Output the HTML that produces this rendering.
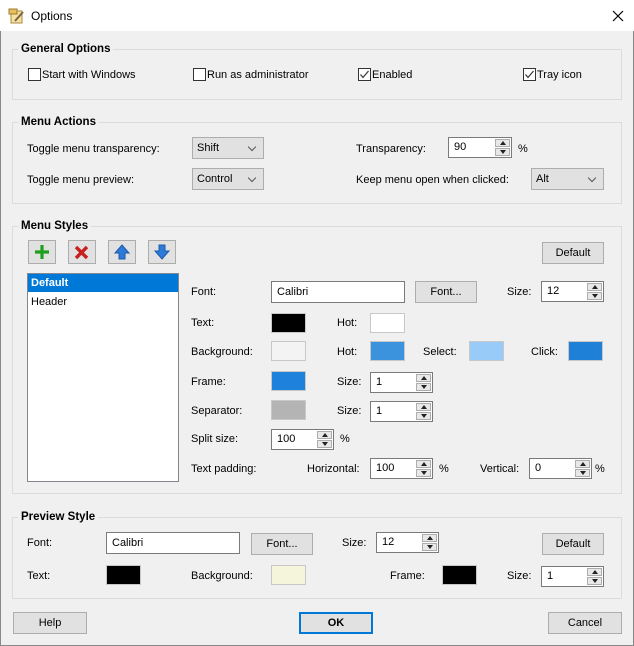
<!DOCTYPE html>
<html><head><meta charset="utf-8"><style>
*{box-sizing:border-box;margin:0;padding:0}
body{width:634px;height:646px;overflow:hidden;background:#f0f0f0;font-family:"Liberation Sans",Tahoma,sans-serif;font-size:11px;color:#000;position:relative}
.a{position:absolute}
.t{position:absolute;line-height:14px;white-space:nowrap}
.grp{position:absolute;border:1px solid #dcdcdc}
.gt{position:absolute;background:#f0f0f0;padding:0 3px;font-weight:bold;font-size:11.5px;line-height:14px}
.cb{position:absolute;width:13px;height:13px;border:1px solid #333;background:#fff}
.cmb{position:absolute;border:1px solid #adadad;background:#e1e1e1;height:22px;line-height:20px;padding-left:4px}
.cmb:after{content:"";position:absolute;right:8px;top:6px;width:5px;height:5px;border-right:1px solid #555;border-bottom:1px solid #555;transform:rotate(45deg)}
.btn{position:absolute;border:1px solid #adadad;background:#e1e1e1;height:22px;line-height:20px;text-align:center}
.tb{position:absolute;border:1px solid #7a7a7a;background:#fff;height:22px;line-height:20px;padding-left:5px}
.spin{position:absolute;border:1px solid #7a7a7a;background:#fff;height:21px;line-height:19px;padding-left:5px}
.spin i{position:absolute;right:1px;width:15px;height:8px;border:1px solid #adadad;background:#e8e8e8}
.spin i.u{top:1px}.spin i.d{bottom:1px}
.spin i:after{content:"";position:absolute;left:4px;border-left:3px solid transparent;border-right:3px solid transparent}
.spin i.u:after{top:1px;border-bottom:4px solid #222}
.spin i.d:after{top:1px;border-top:4px solid #222}
.sw{position:absolute;width:35px;height:20px;border:1px solid #c8c8c8}
</style></head><body>
<div class="a" style="left:0;top:0;width:634px;height:646px;border:1px solid #888;border-top:none"></div>
<div class="a" style="left:0;top:0;width:634px;height:31px;background:#fff"></div>
<svg class="a" style="left:8px;top:7px" width="17" height="17" viewBox="0 0 17 17"><rect x="3" y="4" width="11" height="12" fill="#f3e3a0" stroke="#a88a40"/><rect x="1" y="2" width="8" height="5" fill="#e8c060" stroke="#a07830"/><path d="M7 14 L15 5" stroke="#806040" stroke-width="2"/></svg>
<div class="t" style="left:31px;top:9px;font-size:12px">Options</div>
<svg class="a" style="left:612px;top:10px" width="12" height="12"><path d="M1 1L11 11M11 1L1 11" stroke="#000" stroke-width="1.2"/></svg>

<div class="grp" style="left:12px;top:49px;width:610px;height:51px"></div>
<div class="gt" style="left:18px;top:42px">General Options</div>
<div class="cb" style="left:28px;top:68px"></div><div class="t" style="left:42px;top:68px">Start with Windows</div>
<div class="cb" style="left:193px;top:68px"></div><div class="t" style="left:207px;top:68px">Run as administrator</div>
<div class="cb" style="left:358px;top:68px"></div><svg class="a" style="left:358px;top:68px" width="13" height="13"><path d="M2.5 6.5L5 9.5L10.5 3" stroke="#333" stroke-width="1.2" fill="none"/></svg><div class="t" style="left:372px;top:68px">Enabled</div>
<div class="cb" style="left:523px;top:68px"></div><svg class="a" style="left:523px;top:68px" width="13" height="13"><path d="M2.5 6.5L5 9.5L10.5 3" stroke="#333" stroke-width="1.2" fill="none"/></svg><div class="t" style="left:537px;top:68px">Tray icon</div>

<div class="grp" style="left:12px;top:122px;width:610px;height:82px"></div>
<div class="gt" style="left:18px;top:115px">Menu Actions</div>
<div class="t" style="left:27px;top:142px">Toggle menu transparency:</div>
<div class="cmb" style="left:192px;top:137px;width:72px">Shift</div>
<div class="t" style="left:27px;top:173px">Toggle menu preview:</div>
<div class="cmb" style="left:192px;top:168px;width:72px">Control</div>
<div class="t" style="left:356px;top:142px">Transparency:</div>
<div class="spin" style="left:448px;top:137px;width:64px">90<i class="u"></i><i class="d"></i></div>
<div class="t" style="left:518px;top:142px">%</div>
<div class="t" style="left:356px;top:173px">Keep menu open when clicked:</div>
<div class="cmb" style="left:531px;top:168px;width:73px">Alt</div>

<div class="grp" style="left:12px;top:226px;width:610px;height:268px"></div>
<div class="gt" style="left:18px;top:219px">Menu Styles</div>
<div class="btn" style="left:28px;top:240px;width:28px;height:24px"></div>
<svg class="a" style="left:33px;top:243px" width="18" height="18"><path d="M9 2V16M2 9H16" stroke="#1ea01e" stroke-width="3.2"/></svg>
<div class="btn" style="left:68px;top:240px;width:28px;height:24px"></div>
<svg class="a" style="left:74px;top:245px" width="15" height="15"><path d="M2 2L13 13M13 2L2 13" stroke="#c82020" stroke-width="3.4"/></svg>
<div class="btn" style="left:108px;top:240px;width:28px;height:24px"></div>
<svg class="a" style="left:114px;top:243px" width="16" height="18"><path d="M8 2L15 10H11V16H5V10H1Z" fill="#2f7ad8" stroke="#1d5aa8"/></svg>
<div class="btn" style="left:148px;top:240px;width:28px;height:24px"></div>
<svg class="a" style="left:154px;top:243px" width="16" height="18"><path d="M8 16L15 8H11V2H5V8H1Z" fill="#2f7ad8" stroke="#1d5aa8"/></svg>
<div class="btn" style="left:542px;top:242px;width:62px">Default</div>
<div class="a" style="left:27px;top:273px;width:152px;height:209px;border:1px solid #828790;background:#fff"></div>
<div class="a" style="left:28px;top:274px;width:150px;height:18px;background:#0078d7"></div>
<div class="t" style="left:31px;top:276px;color:#fff;font-weight:bold">Default</div>
<div class="t" style="left:31px;top:295px">Header</div>

<div class="t" style="left:191px;top:285px">Font:</div>
<div class="tb" style="left:271px;top:281px;width:134px">Calibri</div>
<div class="btn" style="left:415px;top:281px;width:62px">Font...</div>
<div class="t" style="left:507px;top:285px">Size:</div>
<div class="spin" style="left:541px;top:281px;width:63px">12<i class="u"></i><i class="d"></i></div>
<div class="t" style="left:191px;top:316px">Text:</div>
<div class="sw" style="left:271px;top:313px;background:#000"></div>
<div class="t" style="left:337px;top:316px">Hot:</div>
<div class="sw" style="left:370px;top:313px;background:#fff"></div>
<div class="t" style="left:191px;top:345px">Background:</div>
<div class="sw" style="left:271px;top:341px;background:#f3f3f3"></div>
<div class="t" style="left:337px;top:345px">Hot:</div>
<div class="sw" style="left:370px;top:341px;background:#3a93dc"></div>
<div class="t" style="left:423px;top:345px">Select:</div>
<div class="sw" style="left:469px;top:341px;background:#99cbf8"></div>
<div class="t" style="left:531px;top:345px">Click:</div>
<div class="sw" style="left:568px;top:341px;background:#1f80d8"></div>
<div class="t" style="left:191px;top:375px">Frame:</div>
<div class="sw" style="left:271px;top:371px;background:#1e82dc"></div>
<div class="t" style="left:337px;top:375px">Size:</div>
<div class="spin" style="left:370px;top:372px;width:63px">1<i class="u"></i><i class="d"></i></div>
<div class="t" style="left:191px;top:404px">Separator:</div>
<div class="sw" style="left:271px;top:400px;background:#b4b4b4"></div>
<div class="t" style="left:337px;top:404px">Size:</div>
<div class="spin" style="left:370px;top:401px;width:63px">1<i class="u"></i><i class="d"></i></div>
<div class="t" style="left:191px;top:432px">Split size:</div>
<div class="spin" style="left:271px;top:429px;width:63px">100<i class="u"></i><i class="d"></i></div>
<div class="t" style="left:340px;top:432px">%</div>
<div class="t" style="left:191px;top:462px">Text padding:</div>
<div class="t" style="left:307px;top:462px">Horizontal:</div>
<div class="spin" style="left:370px;top:458px;width:63px">100<i class="u"></i><i class="d"></i></div>
<div class="t" style="left:439px;top:462px">%</div>
<div class="t" style="left:480px;top:462px">Vertical:</div>
<div class="spin" style="left:529px;top:458px;width:63px">0<i class="u"></i><i class="d"></i></div>
<div class="t" style="left:595px;top:462px">%</div>

<div class="grp" style="left:12px;top:517px;width:610px;height:82px"></div>
<div class="gt" style="left:18px;top:510px">Preview Style</div>
<div class="t" style="left:27px;top:536px">Font:</div>
<div class="tb" style="left:106px;top:532px;width:134px">Calibri</div>
<div class="btn" style="left:251px;top:533px;width:62px">Font...</div>
<div class="t" style="left:342px;top:536px">Size:</div>
<div class="spin" style="left:376px;top:532px;width:63px">12<i class="u"></i><i class="d"></i></div>
<div class="btn" style="left:542px;top:533px;width:62px">Default</div>
<div class="t" style="left:27px;top:569px">Text:</div>
<div class="sw" style="left:106px;top:565px;background:#000"></div>
<div class="t" style="left:191px;top:569px">Background:</div>
<div class="sw" style="left:271px;top:565px;background:#f5f5dc"></div>
<div class="t" style="left:390px;top:569px">Frame:</div>
<div class="sw" style="left:442px;top:565px;background:#000"></div>
<div class="t" style="left:507px;top:569px">Size:</div>
<div class="spin" style="left:541px;top:566px;width:63px">1<i class="u"></i><i class="d"></i></div>

<div class="btn" style="left:13px;top:612px;width:74px">Help</div>
<div class="btn" style="left:299px;top:612px;width:74px;border:2px solid #0078d7;line-height:18px;font-weight:bold">OK</div>
<div class="btn" style="left:548px;top:612px;width:74px">Cancel</div>
</body></html>
